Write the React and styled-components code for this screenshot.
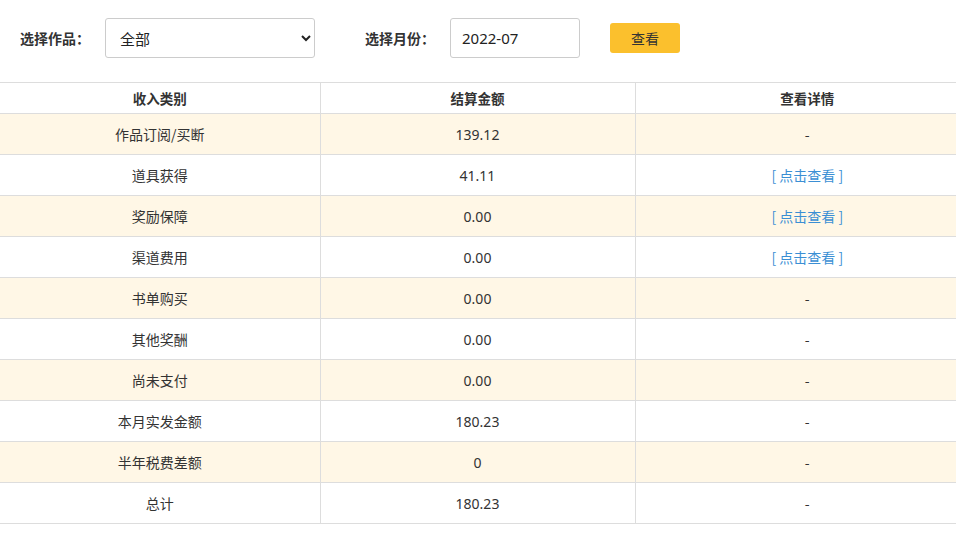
import React from "react";
import styled, { createGlobalStyle } from "styled-components";

const G = createGlobalStyle`
  body{margin:0;background:#fff;font-family:"Noto Sans CJK SC","Noto Sans",sans-serif;color:#333;overflow:hidden;}
`;
const Bar = styled.div`display:flex;align-items:center;height:82px;padding:0 0 6px 20px;box-sizing:border-box;`;
const Label = styled.span`font-size:14px;font-weight:bold;color:#333;margin-right:${p=>p.mr}px;`;
const Select = styled.select`width:210px;height:40px;border:1px solid #ccc;border-radius:3px;background:#fff;font-size:15px;padding-left:10px;margin-right:50px;font-family:inherit;color:#222;`;
const Input = styled.input`width:130px;height:40px;box-sizing:border-box;border:1px solid #ccc;border-radius:3px;font-size:15px;padding-left:11px;margin-right:30px;font-family:"Noto Sans",sans-serif;color:#222;`;
const Btn = styled.button`width:70px;height:30px;border:none;border-radius:3px;background:#fbc02d;font-size:14px;color:#333;font-family:inherit;`;
const Table = styled.table`width:979px;border-collapse:collapse;font-size:14px;table-layout:fixed;`;
const Th = styled.th`height:30px;border:1px solid #ddd;border-left:none;font-weight:bold;font-size:13.5px;padding:0;&:last-child{border-right:none;}`;
const Tr = styled.tr`background:${p=>p.alt?"#fff7e6":"#fff"};`;
const Td = styled.td`height:40px;border:1px solid #ddd;border-left:none;text-align:center;padding:0;color:#333;font-family:${p=>p.num?'"Noto Sans",sans-serif':"inherit"};&:last-child{border-right:none;}`;
const Link = styled.span`color:#3b8fd4;`;

const rows=[["作品订阅/买断","139.12",0],["道具获得","41.11",1],["奖励保障","0.00",1],["渠道费用","0.00",1],["书单购买","0.00",0],["其他奖酬","0.00",0],["尚未支付","0.00",0],["本月实发金额","180.23",0],["半年税费差额","0",0],["总计","180.23",0]];

export default function App(){
  return <>
    <G/>
    <Bar>
      <Label mr={15}>选择作品：</Label>
      <Select><option>全部</option></Select>
      <Label mr={15}>选择月份：</Label>
      <Input defaultValue="2022-07"/>
      <Btn>查看</Btn>
    </Bar>
    <Table>
      <colgroup><col style={{width:320}}/><col style={{width:315}}/><col/></colgroup>
      <thead><tr><Th>收入类别</Th><Th>结算金额</Th><Th>查看详情</Th></tr></thead>
      <tbody>{rows.map((r,i)=><Tr key={i} alt={i%2===0}>
        <Td>{r[0]}</Td><Td num>{r[1]}</Td><Td>{r[2]?<Link>[ 点击查看 ]</Link>:"-"}</Td>
      </Tr>)}</tbody>
    </Table>
  </>;
}
